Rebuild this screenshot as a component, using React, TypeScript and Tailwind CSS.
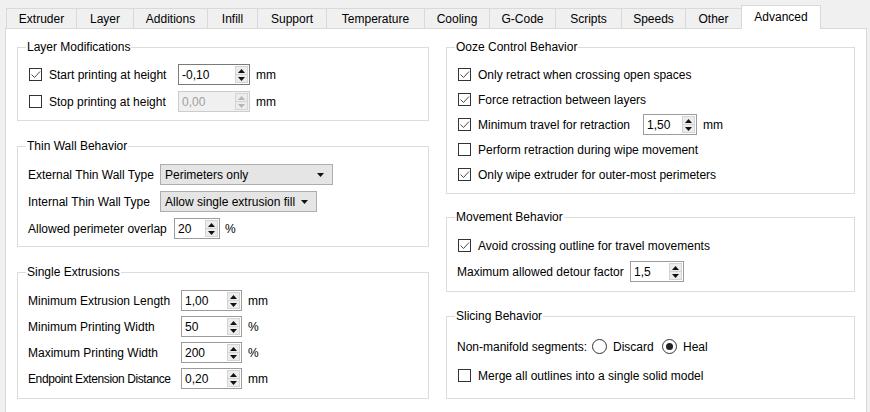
import React from "react";

const tabs = [
  { label: "Extruder", w: "w-[70px]" },
  { label: "Layer", w: "w-[57px]" },
  { label: "Additions", w: "w-[74px]" },
  { label: "Infill", w: "w-[50px]" },
  { label: "Support", w: "w-[69px]" },
  { label: "Temperature", w: "w-[98px]" },
  { label: "Cooling", w: "w-[65px]" },
  { label: "G-Code", w: "w-[66px]" },
  { label: "Scripts", w: "w-[66px]" },
  { label: "Speeds", w: "w-[64px]" },
  { label: "Other", w: "w-[56px]" },
];

const Check = ({ checked }: { checked?: boolean }) => (
  <span className="w-[13px] h-[13px] shrink-0 border border-[#333333] bg-white flex items-center justify-center">
    {checked && (
      <svg width="11" height="11" viewBox="0 0 11 11">
        <path d="M1.5 5.5 L4.5 8.5 L10 2.5" stroke="#4a4a4a" strokeWidth="1" fill="none" />
      </svg>
    )}
  </span>
);

const Radio = ({ checked }: { checked?: boolean }) => (
  <span className="w-[15px] h-[15px] shrink-0 rounded-full border border-[#333333] bg-white flex items-center justify-center">
    {checked && <span className="w-[7px] h-[7px] rounded-full bg-[#222222]" />}
  </span>
);

const Arrows = ({ disabled }: { disabled?: boolean }) => {
  const c = disabled ? "#b5b5b5" : "#111111";
  return (
    <div className="ml-auto mr-px flex flex-col w-[13px] h-[17px]">
      <div className="h-[9px] flex items-center justify-center border border-[#d4d4d4] bg-[#ececec]">
        <svg width="7" height="4" viewBox="0 0 7 4">
          <path d="M0 4 L3.5 0 L7 4 Z" fill={c} />
        </svg>
      </div>
      <div className="h-[8px] flex items-center justify-center border border-t-0 border-[#d4d4d4] bg-[#ececec]">
        <svg width="7" height="4" viewBox="0 0 7 4">
          <path d="M0 0 L7 0 L3.5 4 Z" fill={c} />
        </svg>
      </div>
    </div>
  );
};

const Spin = ({
  value,
  className,
  disabled,
  dark,
}: {
  value: string;
  className: string;
  disabled?: boolean;
  dark?: boolean;
}) => (
  <div
    className={`h-[21px] shrink-0 flex items-center pl-[3px] border ${className} ${
      disabled
        ? "bg-[#f0f0f0] border-[#cccccc] text-[#a0a0a0]"
        : dark
        ? "bg-white border-[#7a7a7a]"
        : "bg-white border-[#9c9c9c]"
    }`}
  >
    <span>{value}</span>
    <Arrows disabled={disabled} />
  </div>
);

const Combo = ({ value, className }: { value: string; className: string }) => (
  <div
    className={`h-[21px] shrink-0 flex items-center pl-[4px] pr-[8px] bg-[#e5e5e5] border border-[#adadad] ${className}`}
  >
    <span>{value}</span>
    <svg className="ml-auto" width="7" height="4" viewBox="0 0 7 4">
      <path d="M0 0 L7 0 L3.5 4 Z" fill="#111111" />
    </svg>
  </div>
);

const Group = ({
  title,
  className,
  children,
}: {
  title: string;
  className: string;
  children: React.ReactNode;
}) => (
  <fieldset className={`border border-[#dcdcdc] px-[10px] ${className}`}>
    <legend className="-ml-[2px] px-[1px] leading-[14px]">{title}</legend>
    {children}
  </fieldset>
);

const Row = ({ children, className = "" }: { children: React.ReactNode; className?: string }) => (
  <div className={`h-[21px] flex items-center ${className}`}>{children}</div>
);

export default function App() {
  return (
    <div className="w-[870px] h-[412px] overflow-hidden whitespace-nowrap bg-[#f0f0f0] text-[12px] text-black font-['Liberation_Sans',Arial,sans-serif]">
      <div className="h-[28px] flex items-end pl-[6px]">
        {tabs.map((t) => (
          <div
            key={t.label}
            className={`${t.w} h-[20px] flex items-center justify-center border-t border-l border-[#d9d9d9] bg-[#f0f0f0]`}
          >
            {t.label}
          </div>
        ))}
        <div className="relative z-10 -mb-px w-[80px] h-[24px] pb-[2px] flex items-center justify-center border-x border-t border-[#d9d9d9] bg-white">
          Advanced
        </div>
      </div>

      <div className="ml-[5px] w-[862px] h-[390px] bg-white border border-[#d9d9d9] flex gap-[17px] pl-[11px] pt-[11px]">
        {/* left column */}
        <div className="w-[412px] flex flex-col gap-[18px]">
          <Group title="Layer Modifications" className="h-[81px]">
            <div className="flex flex-col gap-[6px] pt-[10px]">
              <Row>
                <div className="w-[150px] shrink-0 flex items-center gap-[7px] pl-px">
                  <Check checked />
                  <span>Start printing at height</span>
                </div>
                <Spin value="-0,10" className="w-[72px]" dark />
                <span className="ml-[6px]">mm</span>
              </Row>
              <Row>
                <div className="w-[150px] shrink-0 flex items-center gap-[7px] pl-px">
                  <Check />
                  <span>Stop printing at height</span>
                </div>
                <Spin value="0,00" className="w-[72px]" disabled />
                <span className="ml-[6px]">mm</span>
              </Row>
            </div>
          </Group>

          <Group title="Thin Wall Behavior" className="h-[108px]">
            <div className="flex flex-col gap-[6px] pt-[11px]">
              <Row>
                <span className="w-[132px] shrink-0">External Thin Wall Type</span>
                <Combo value="Perimeters only" className="w-[173px]" />
              </Row>
              <Row>
                <span className="w-[132px] shrink-0">Internal Thin Wall Type</span>
                <Combo value="Allow single extrusion fill" className="w-[157px]" />
              </Row>
              <Row>
                <span className="w-[146px] shrink-0">Allowed perimeter overlap</span>
                <Spin value="20" className="w-[46px]" />
                <span className="ml-[5px]">%</span>
              </Row>
            </div>
          </Group>

          <Group title="Single Extrusions" className="h-[134px]">
            <div className="flex flex-col gap-[5px] pt-[11px]">
              <Row>
                <span className="w-[153px] shrink-0">Minimum Extrusion Length</span>
                <Spin value="1,00" className="w-[61px]" />
                <span className="ml-[6px]">mm</span>
              </Row>
              <Row>
                <span className="w-[153px] shrink-0">Minimum Printing Width</span>
                <Spin value="50" className="w-[61px]" />
                <span className="ml-[6px]">%</span>
              </Row>
              <Row>
                <span className="w-[153px] shrink-0">Maximum Printing Width</span>
                <Spin value="200" className="w-[61px]" />
                <span className="ml-[6px]">%</span>
              </Row>
              <Row>
                <span className="w-[153px] shrink-0 tracking-[-0.4px]">Endpoint Extension Distance</span>
                <Spin value="0,20" className="w-[61px]" />
                <span className="ml-[6px]">mm</span>
              </Row>
            </div>
          </Group>
        </div>

        {/* right column */}
        <div className="w-[409px] flex flex-col">
          <Group title="Ooze Control Behavior" className="h-[154px]">
            <div className="flex flex-col gap-[4px] pt-[10px]">
              <Row className="gap-[7px] pl-px">
                <Check checked />
                <span>Only retract when crossing open spaces</span>
              </Row>
              <Row className="gap-[7px] pl-px">
                <Check checked />
                <span>Force retraction between layers</span>
              </Row>
              <Row className="pl-px">
                <div className="w-[185px] shrink-0 flex items-center gap-[7px]">
                  <Check checked />
                  <span>Minimum travel for retraction</span>
                </div>
                <Spin value="1,50" className="w-[54px]" />
                <span className="ml-[6px]">mm</span>
              </Row>
              <Row className="gap-[7px] pl-px">
                <Check />
                <span>Perform retraction during wipe movement</span>
              </Row>
              <Row className="gap-[7px] pl-px">
                <Check checked />
                <span>Only wipe extruder for outer-most perimeters</span>
              </Row>
            </div>
          </Group>

          <Group title="Movement Behavior" className="h-[82px] mt-[16px]">
            <div className="flex flex-col gap-[5px] pt-[11px]">
              <Row className="gap-[7px] pl-px">
                <Check checked />
                <span>Avoid crossing outline for travel movements</span>
              </Row>
              <Row>
                <span className="w-[173px] shrink-0">Maximum allowed detour factor</span>
                <Spin value="1,5" className="w-[54px]" />
              </Row>
            </div>
          </Group>

          <Group title="Slicing Behavior" className="h-[90px] mt-[17px]">
            <div className="flex flex-col gap-[8px] pt-[13px]">
              <Row>
                <span className="w-[135px] shrink-0">Non-manifold segments:</span>
                <Radio />
                <span className="ml-[6px] w-[49px]">Discard</span>
                <Radio checked />
                <span className="ml-[6px]">Heal</span>
              </Row>
              <Row className="gap-[7px] pl-px">
                <Check />
                <span>Merge all outlines into a single solid model</span>
              </Row>
            </div>
          </Group>
        </div>
      </div>
    </div>
  );
}
